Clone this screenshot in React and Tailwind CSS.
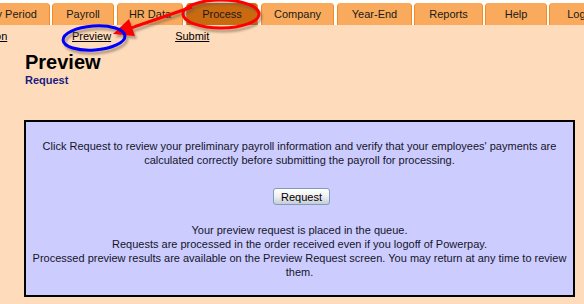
const tabs = [
  { label: "Pay Period", w: 80, ml: -30 },
  { label: "Payroll", w: 62, ml: 2 },
  { label: "HR Data", w: 66, ml: 3 },
  { label: "Process", w: 72, ml: 3, active: true },
  { label: "Company", w: 73, ml: 3 },
  { label: "Year-End", w: 75, ml: 3 },
  { label: "Reports", w: 69, ml: 2 },
  { label: "Help", w: 62, ml: 2 },
  { label: "Logout", w: 70, ml: 2 },
];

function Tab({ label, w, ml, active }) {
  return (
    <div
      style={{ width: w, marginLeft: ml }}
      className={
        "shrink-0 h-[22px] flex items-center justify-center rounded-t-[4px] border-x border-[#f08c26] text-[11px] text-[#1a1a1a] " +
        (active ? "bg-[#c96a10]" : "bg-[#f9aa5c]")
      }
    >
      {label}
    </div>
  );
}

function Annotations() {
  return (
    <svg className="absolute left-0 top-0 pointer-events-none" width="584" height="304">
      <defs>
        <filter id="sh" x="-20%" y="-20%" width="140%" height="140%">
          <feGaussianBlur stdDeviation="1.2" />
        </filter>
      </defs>
      <g transform="translate(2 3)" opacity="0.5" filter="url(#sh)">
        <ellipse cx="221" cy="14" rx="38" ry="14" fill="none" stroke="#6b5a48" strokeWidth="3" />
        <line x1="192" y1="7" x2="128" y2="29" stroke="#6b5a48" strokeWidth="3" />
        <polygon points="113,34 129,19 135,36" fill="#6b5a48" />
        <ellipse cx="94" cy="38" rx="31" ry="12" fill="none" stroke="#6b5a48" strokeWidth="3" transform="rotate(-4 94 38)" />
      </g>
      <ellipse cx="221" cy="14" rx="38" ry="14" fill="none" stroke="#ff0000" strokeWidth="3" />
      <line x1="192" y1="7" x2="128" y2="29" stroke="#ff0000" strokeWidth="3" />
      <polygon points="113,34 129,19 135,36" fill="#ff0000" />
      <ellipse cx="94" cy="38" rx="31" ry="12" fill="none" stroke="#0000ff" strokeWidth="3" transform="rotate(-4 94 38)" />
    </svg>
  );
}

export default function App() {
  return (
    <div
      className="relative w-[584px] h-[304px] overflow-hidden bg-white"
      style={{ fontFamily: '"Liberation Sans", Arial, sans-serif' }}
    >
      <div className="flex pt-[3px] overflow-hidden">
        {tabs.map((t) => (
          <Tab key={t.label} {...t} />
        ))}
      </div>
      <div className="bg-[#fedcbb] h-[279px]">
        <div className="flex text-[11px] leading-[14px] text-black pt-[4px] h-[26px]">
          <span className="underline ml-[-38px] w-[110px]">Selection</span>
          <span className="underline">Preview</span>
          <span className="underline ml-[64px]">Submit</span>
        </div>
        <div className="ml-[25px]">
          <div className="text-[20px] leading-[22px] font-bold text-black">Preview</div>
          <div className="text-[11px] leading-[14px] font-bold text-[#1a1a80]">Request</div>
        </div>
        <div className="ml-[24px] mt-[33px] w-[551px] h-[177px] border-2 border-black bg-[#ccccff] text-[11px] leading-[14px] text-[#15152a] text-center pt-[17px]">
          <p>
            Click Request to review your preliminary payroll information and verify that your employees' payments are
            <br />
            calculated correctly before submitting the payroll for processing.
          </p>
          <div className="mt-[21px] flex justify-center">
            <button className="w-[57px] h-[17px] ml-[4px] rounded-[3px] border border-[#7f9db9] bg-gradient-to-b from-white via-[#f0f0f0] to-[#c5ccd8] text-[11px] leading-[14px] text-black">
              Request
            </button>
          </div>
          <p className="mt-[18px]">
            Your preview request is placed in the queue.
            <br />
            Requests are processed in the order received even if you logoff of Powerpay.
            <br />
            Processed preview results are available on the Preview Request screen. You may return at any time to review
            <br />
            them.
          </p>
        </div>
      </div>
      <Annotations />
    </div>
  );
}
